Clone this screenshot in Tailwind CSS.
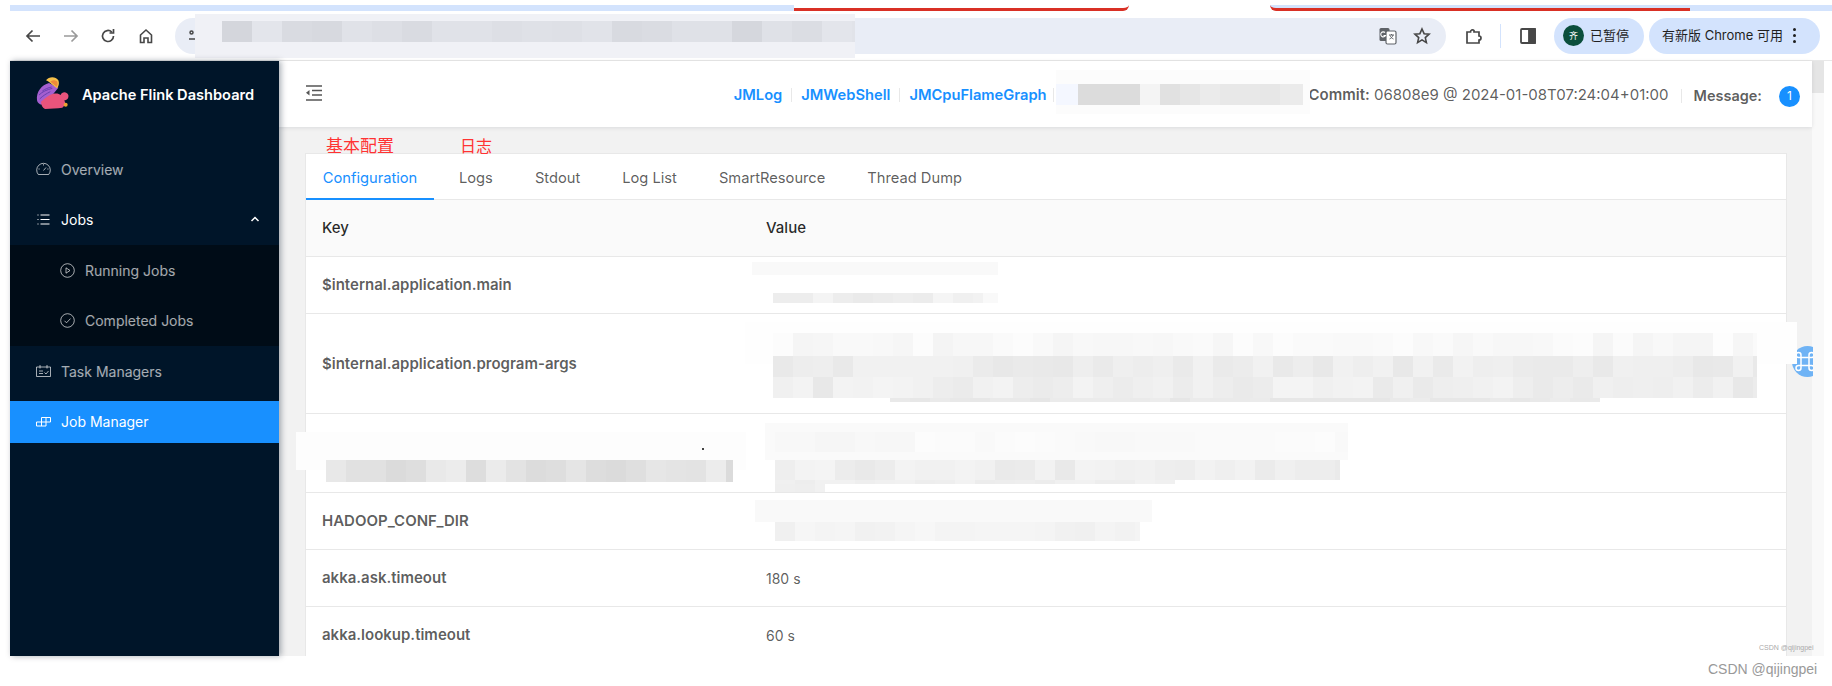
<!DOCTYPE html>
<html lang="en">
  <head>
    <meta charset="UTF-8" />
    <title>Apache Flink Dashboard</title>
    <script src="https://cdn.jsdelivr.net/npm/@tailwindcss/browser@4"></script>
  </head>

  <body class="relative w-[1832px] h-[686px] overflow-hidden bg-white font-['Inter','Noto_Sans_CJK_SC',sans-serif]">
    <!-- browser tab strip remnant -->
    <div class="h-[11px] flex pt-[5px] pl-[10px]">
      <div class="w-[784px] bg-[#d3e3fd]"></div>
      <div class="w-[335px] border-b-[3px] border-[#d93025] rounded-br-md"></div>
      <div class="w-[141px]"></div>
      <div class="w-[420px] bg-[#d3e3fd] border-b-[3px] border-[#d93025] rounded-bl-md"></div>
      <div class="flex-1 bg-[#d3e3fd]"></div>
    </div>

    <!-- browser toolbar -->
    <div class="h-[50px] ml-[10px] flex items-center rounded-tl-xl bg-white text-[#474747] border-b border-[#e8e8e8]">
      <div class="w-[165px] flex items-center pl-[13px] gap-[17.500px]">
        <svg class="w-[20px] h-[20px]" viewBox="0 0 20 20" fill="none" stroke="#474747" stroke-width="1.7"><path d="M17 10H4M9.5 4.5 4 10l5.5 5.5" /></svg>
        <svg class="w-[20px] h-[20px]" viewBox="0 0 20 20" fill="none" stroke="#9a9a9a" stroke-width="1.7"><path d="M3 10h13M10.5 4.5 16 10l-5.500 5.500" /></svg>
        <svg class="w-[20px] h-[20px]" viewBox="0 0 20 20" fill="none" stroke="#474747" stroke-width="1.7"><path d="M15.500 10a5.500 5.500 0 1 1-1.700-4M15.500 3v4h-4" /></svg>
        <svg class="w-[20px] h-[20px]" viewBox="0 0 20 20" fill="none" stroke="#474747" stroke-width="1.600"><path d="M4.500 9v7.500h3.500v-4.500h4v4.500h3.500V9L10 4z" /></svg>
      </div>
      <div class="w-[1271px] h-[36px] rounded-full bg-[#e9edf6] flex items-center pl-[13px] pr-[14px]">
        <svg class="w-[14px] h-[14px]" viewBox="0 0 14 14" fill="none" stroke="#474747" stroke-width="1.500"><circle cx="3.500" cy="3.500" r="1.500" /><path d="M7 3.500h6M1 10h6" /><circle cx="10" cy="10" r="1.500" /></svg>
        <div class="flex-1"></div>
        <svg class="w-[20px] h-[20px] mr-[14px]" viewBox="0 0 20 20"><rect x="1.500" y="2" width="10" height="13" rx="1.500" fill="#5f6368" /><rect x="8" y="5" width="10" height="13" rx="1.500" fill="#fff" stroke="#5f6368" stroke-width="1.200" /><path d="M11 9h5M13.500 8v1M15 9c-.5 2-2 3.500-3.500 4M12 9.500c.5 1.500 2 3 3.500 3.500" stroke="#5f6368" fill="none" /><path d="M7 6.500a2.500 2.500 0 1 0 .5 3H5.500" stroke="#fff" fill="none" stroke-width="1.100" /></svg>
        <svg class="w-[20px] h-[20px]" viewBox="0 0 20 20" fill="none" stroke="#474747" stroke-width="1.600"><path d="m10 3 2.100 4.700 5 .5-3.800 3.400 1.100 5L10 13.900l-4.400 2.700 1.100-5L2.900 8.200l5-.5z" /></svg>
      </div>
      <div class="w-[54px] flex justify-center pl-[2px]">
        <svg class="w-[20px] h-[20px]" viewBox="0 0 20 20" fill="none" stroke="#474747" stroke-width="1.700"><path d="M3 6h3.500a2 2 0 0 1 3.500-1.500V6h5v4a2 2 0 0 1 0 4v3H3z" /></svg>
      </div>
      <div class="w-px h-[24px] bg-[#d3e3fd]"></div>
      <div class="w-[53px] flex justify-center">
        <svg class="w-[18px] h-[18px]" viewBox="0 0 18 18" fill="none" stroke="#474747" stroke-width="1.800"><rect x="2" y="2" width="14" height="14" rx="1" /><rect x="10" y="2" width="6" height="14" fill="#474747" /></svg>
      </div>
      <div class="w-[90px] h-[36px] rounded-full bg-[#d3e3fd] flex items-center pl-[9px] gap-[6px] text-[13px] text-[#1f1f1f]">
        <span class="w-[21px] h-[21px] rounded-full bg-[#0b4f3c] text-white text-[9px] flex items-center justify-center">齐</span>
        <span>已暂停</span>
      </div>
      <div class="w-[171px] h-[36px] ml-[5px] rounded-full bg-[#d3e3fd] flex items-center pl-[13px] gap-[10px] text-[13px] text-[#1f1f1f] whitespace-nowrap">
        <span>有新版 Chrome 可用</span>
        <span class="flex flex-col gap-[3px]">
          <span class="w-[3px] h-[3px] rounded-full bg-[#1f1f1f]"></span>
          <span class="w-[3px] h-[3px] rounded-full bg-[#1f1f1f]"></span>
          <span class="w-[3px] h-[3px] rounded-full bg-[#1f1f1f]"></span>
        </span>
      </div>
    </div>

    <!-- page -->
    <div class="flex h-[595px] ml-[10px] mr-[8px] bg-[#f2f2f2]">
      <aside class="relative z-10 w-[269px] shrink-0 bg-[#001529] shadow-[2px_0_6px_rgba(0,21,41,0.35)] text-[14px] text-white/65">
        <div class="h-[64px] flex items-center pl-[26px] gap-[12px]">
          <svg class="w-[34px] h-[34px]" viewBox="33 15 102 102">
            <path d="M36 88C33 62 50 42 72 36l28 14-16 20-22 18-4 14c-10 0-20-3-22-14z" fill="#a45fd0" />
            <path d="M42 72c10-10 24-16 40-20M44 84c10-10 20-16 32-22M52 60c8-6 18-10 28-12" stroke="#6a3fb0" stroke-width="3" fill="none" />
            <path d="M63 28c9-12 29-12 37 0 4 10 0 20-4 24L80 40c-5-6-10-9-17-12z" fill="#f5c04a" />
            <path d="M76 32c6-6 16-6 21 0 2 6 0 12-2 15L84 38z" fill="#ee8a3a" />
            <path d="M48 92c12-10 22-20 37-24 10-2 18 0 22 4 3-10 18-12 23 0 2 10-5 16-12 16l4 12-10 10-12 2-40 2c-8-4-12-14-12-22z" fill="#e9547c" />
            <circle cx="122" cy="101" r="6" fill="#eda12f" />
          </svg>
          <span class="font-semibold text-white text-[14.600px] pt-[6px]">Apache Flink Dashboard</span>
        </div>

        <ul class="pt-[20px]">
          <li class="h-[50px] flex items-center pl-[26px] gap-[10px] pb-[2px]">
            <svg class="w-[15px] h-[15px]" viewBox="0 0 15 15" fill="none" stroke="currentColor" stroke-width="1"><path d="M2.300 12.500a6.800 6.800 0 1 1 10.400 0zM7.500 8.500 10 5.500M7.500 2.200v1.300M2.500 7h1.200M11.300 7h1.200" /></svg>
            <span>Overview</span>
          </li>
          <li class="h-[50px] flex items-center pl-[26px] gap-[10px] text-white pb-[2px]">
            <svg class="w-[15px] h-[15px]" viewBox="0 0 15 15" fill="none" stroke="currentColor" stroke-width="1"><path d="M4.500 3h9M4.500 7.500h9M4.500 12h9M1.500 3h1M1.500 7.500h1M1.500 12h1" /></svg>
            <span class="flex-1">Jobs</span>
            <svg class="w-[10px] h-[10px] mr-[19px]" viewBox="0 0 10 10" fill="none" stroke="currentColor" stroke-width="1.500"><path d="M1.500 7 5 3.500 8.500 7" /></svg>
          </li>
          <li class="bg-[#000c17] h-[101px] pl-[50px]">
            <div class="h-[50px] flex items-center gap-[10px]">
              <svg class="w-[15px] h-[15px]" viewBox="0 0 15 15" fill="none" stroke="currentColor" stroke-width="1"><circle cx="7.500" cy="7.500" r="6.800" /><path d="m6 4.800 4 2.700-4 2.700z" /></svg>
              <span>Running Jobs</span>
            </div>
            <div class="h-[51px] flex items-center gap-[10px]">
              <svg class="w-[15px] h-[15px]" viewBox="0 0 15 15" fill="none" stroke="currentColor" stroke-width="1"><circle cx="7.500" cy="7.500" r="6.800" /><path d="m4.500 7.800 2 2 4-4.200" /></svg>
              <span>Completed Jobs</span>
            </div>
          </li>
          <li class="h-[55px] flex items-center pl-[26px] gap-[10px] pb-[5px]">
            <svg class="w-[15px] h-[15px]" viewBox="0 0 15 15" fill="none" stroke="currentColor" stroke-width="1"><path d="M.5 3h14v9.500H.5zM4 1v3.500M11 1v3.500M3 7h4M3 9.500h4M8.500 8.500l1.500 1.500 2.500-3" /></svg>
            <span>Task Managers</span>
          </li>
          <li class="h-[42px] flex items-center pl-[26px] gap-[10px] bg-[#1890ff] text-white pb-[2px]">
            <svg class="w-[15px] h-[15px]" viewBox="0 0 15 15" fill="none" stroke="currentColor" stroke-width="1"><path d="M.5 8h9.500v4H.5zM5.500 8v4M5.500 8V3.500h9V8H10M10 3.500V8" /></svg>
            <span>Job Manager</span>
          </li>
        </ul>
      </aside>

      <main class="flex-1 min-w-0 flex flex-col">
        <header class="relative h-[66px] shrink-0 bg-white shadow-[0_1px_4px_rgba(0,21,41,0.1)] flex items-center pl-[26px] pr-[12px] pt-[3px] text-[15px] text-black/65">
          <svg class="w-[18px] h-[16px] -mt-[6px]" viewBox="0 0 18 16" fill="none" stroke="#555" stroke-width="1.300"><path d="M1 1h16M7 5.500h10M7 10h10M1 15h16" /><path d="M4.500 5 1 7.700l3.500 2.800z" fill="#555" stroke="none" /></svg>
          <div class="flex-1"></div>
          <div class="flex items-center font-semibold text-[#1890ff] text-[14.700px]">
            <span>JMLog</span>
            <span class="w-px h-[14px] mx-[9px] bg-[#e8e8e8]"></span>
            <span>JMWebShell</span>
            <span class="w-px h-[14px] mx-[9px] bg-[#e8e8e8]"></span>
            <span>JMCpuFlameGraph</span>
            <span class="w-px h-[14px] ml-[6px] bg-[#e8e8e8]"></span>
          </div>
          <div class="w-[255px]"></div>
          <div class="whitespace-nowrap"><span class="font-semibold">Commit:</span> 06808e9 @ 2024-01-08T07:24:04+01:00</div>
          <span class="w-px h-[14px] mx-[12px] bg-[#e8e8e8]"></span>
          <span class="font-semibold text-[14.500px]">Message:</span>
          <span class="ml-[17px] mt-[1px] w-[21px] h-[21px] rounded-full bg-[#1890ff] text-white text-[12px] flex items-center justify-center">1</span>
        </header>

        <div class="relative flex-1 min-h-0 overflow-hidden pl-[26px] pr-[25px] pt-[26px]">
          <div class="absolute left-[47px] top-[9px] text-[17px] leading-[20px] text-[#f33]">基本配置</div>
          <div class="absolute left-[181px] top-[9px] text-[16px] leading-[20px] text-[#f33]">日志</div>

          <div class="bg-white border border-[#e8e8e8] text-[15px] text-black/65">
            <div class="h-[46px] flex border-b border-[#e8e8e8] text-black/65 text-[14.700px]">
              <span class="w-[128px] flex items-center justify-center text-[#1890ff] border-b-2 border-[#1890ff] h-[46px] pt-[4px]">Configuration</span>
              <span class="ml-[25px] flex items-center pt-[4px]">Logs</span>
              <span class="ml-[42px] flex items-center pt-[4px]">Stdout</span>
              <span class="ml-[42px] flex items-center pt-[4px]">Log List</span>
              <span class="ml-[42px] flex items-center pt-[4px]">SmartResource</span>
              <span class="ml-[42px] flex items-center pt-[4px]">Thread Dump</span>
            </div>
            <div class="h-[57px] flex items-center bg-[#fafafa] border-b border-[#e8e8e8] font-medium text-black/85 pt-[1px]">
              <div class="w-[444px] pl-[16px]">Key</div>
              <div class="pl-[16px]">Value</div>
            </div>
            <div class="h-[57px] flex items-center border-b border-[#e8e8e8]">
              <div class="w-[444px] pl-[16px] font-semibold">$internal.application.main</div>
            </div>
            <div class="h-[100px] flex items-center border-b border-[#e8e8e8] pt-[2px]">
              <div class="w-[444px] pl-[16px] font-semibold">$internal.application.program-args</div>
            </div>
            <div class="h-[79px] border-b border-[#e8e8e8]"></div>
            <div class="h-[57px] flex items-center border-b border-[#e8e8e8]">
              <div class="w-[444px] pl-[16px] font-semibold">HADOOP_CONF_DIR</div>
            </div>
            <div class="h-[57px] flex items-center border-b border-[#e8e8e8]">
              <div class="w-[444px] pl-[16px] font-semibold">akka.ask.timeout</div>
              <div class="pl-[16px] text-[14px]">180 s</div>
            </div>
            <div class="h-[57px] flex items-center border-b border-[#e8e8e8]">
              <div class="w-[444px] pl-[16px] font-semibold">akka.lookup.timeout</div>
              <div class="pl-[16px] text-[14px]">60 s</div>
            </div>
          </div>
        </div>
      </main>
      <!-- page scrollbar -->
      <div class="w-[12px] bg-[#f9f9f9]">
        <div class="h-[32px] bg-[#e5e5e5]"></div>
      </div>
    </div>

    <!-- watermarks -->
    <div class="absolute left-[1759px] top-[643px] text-[7px] leading-[9px] text-[#aaa] font-['Liberation_Sans',sans-serif]">CSDN @qijingpei</div>
    <div class="absolute left-[1708px] top-[660px] text-[14px] leading-[18px] text-[#999] font-['Liberation_Sans',sans-serif]">CSDN @qijingpei</div>

    <!-- clipped translate widget and the redacted areas, laid over the screenshot -->
    <svg class="absolute left-[1792px] top-[346px] w-[21px] h-[31px]" viewBox="0 0 21 31">
      <circle cx="15.500" cy="15.500" r="15.500" fill="#6fb3f5" />
      <path d="M9 11.500h8v8H9zM9 11.500H6.500a2.500 2.500 0 1 1 2.500-2.500zM17 11.500V9a2.500 2.500 0 1 1 2.500 2.500zM9 19.500v2.500a2.500 2.500 0 1 1-2.500-2.500zM17 19.500h2.500a2.500 2.500 0 1 1-2.500 2.500z" fill="none" stroke="#fff" stroke-width="1.500" />
    </svg>
    <svg id="redactions" class="absolute inset-0 pointer-events-none" width="1832" height="686"></svg>

    <script>
      const svg = document.getElementById('redactions');
      let seed = 7;
      const rnd = () => {
        seed = (seed * 16807) % 2147483647;
        return seed / 2147483647;
      };
      const rect = (x, y, w, h, fill) => {
        const r = document.createElementNS('http://www.w3.org/2000/svg', 'rect');
        r.setAttribute('x', x);
        r.setAttribute('y', y);
        r.setAttribute('width', w);
        r.setAttribute('height', h);
        r.setAttribute('fill', fill);
        svg.appendChild(r);
      };
      // a row of mosaic cells: base grey value, with some jitter per cell
      const mosaic = (x0, x1, y, h, base, spread, cell = 20) => {
        for (let x = x0; x < x1; x += cell) {
          const g = Math.round(base + rnd() * spread);
          rect(x, y, Math.min(cell, x1 - x), h, `rgb(${g},${g},${g})`);
        }
      };

      // address bar
      rect(195, 14, 660, 44, '#f0f1f6');
      for (let x = 222; x < 855; x += 30) {
        const g = Math.round(212 + rnd() * 16);
        rect(x, 21, Math.min(30, 855 - x), 21, `rgb(${g},${g + 2},${g + 8})`);
      }

      // header: host name
      rect(1056, 70, 254, 44, '#fcfcfc');
      rect(1056, 84, 22, 21, '#f4f7ff');
      rect(1078, 84, 62, 21, '#dcdcdc');
      rect(1140, 84, 20, 21, '#f4f4f4');
      mosaic(1160, 1303, 84, 21, 224, 12);

      // value of $internal.application.main
      rect(752, 262, 246, 13, '#f9f9f9');
      mosaic(773, 983, 293, 10, 232, 14);
      rect(983, 293, 15, 10, '#f9f9f9');

      // value of program-args, it runs over the scrollbar
      rect(745, 322, 1052, 42, '#fefefe');
      mosaic(773, 1757, 333, 23, 244, 9);
      mosaic(773, 1757, 356, 21, 232, 10);
      mosaic(773, 1757, 377, 21, 232, 12);
      mosaic(890, 1600, 398, 4, 230, 6);

      // third row: key and value
      rect(296, 432, 450, 38, '#fdfdfd');
      mosaic(326, 733, 460, 22, 218, 18);
      rect(702, 448, 2, 2, '#444');
      rect(765, 423, 583, 37, '#fafafa');
      mosaic(775, 1348, 432, 20, 246, 6);
      mosaic(775, 1340, 460, 20, 232, 12);
      mosaic(775, 1175, 480, 4, 236, 6);
      mosaic(775, 825, 484, 8, 238, 4);

      // value of HADOOP_CONF_DIR
      rect(755, 500, 397, 22, '#f9f9f9');
      mosaic(775, 1140, 522, 19, 240, 7);
    </script>
  </body>
</html>
